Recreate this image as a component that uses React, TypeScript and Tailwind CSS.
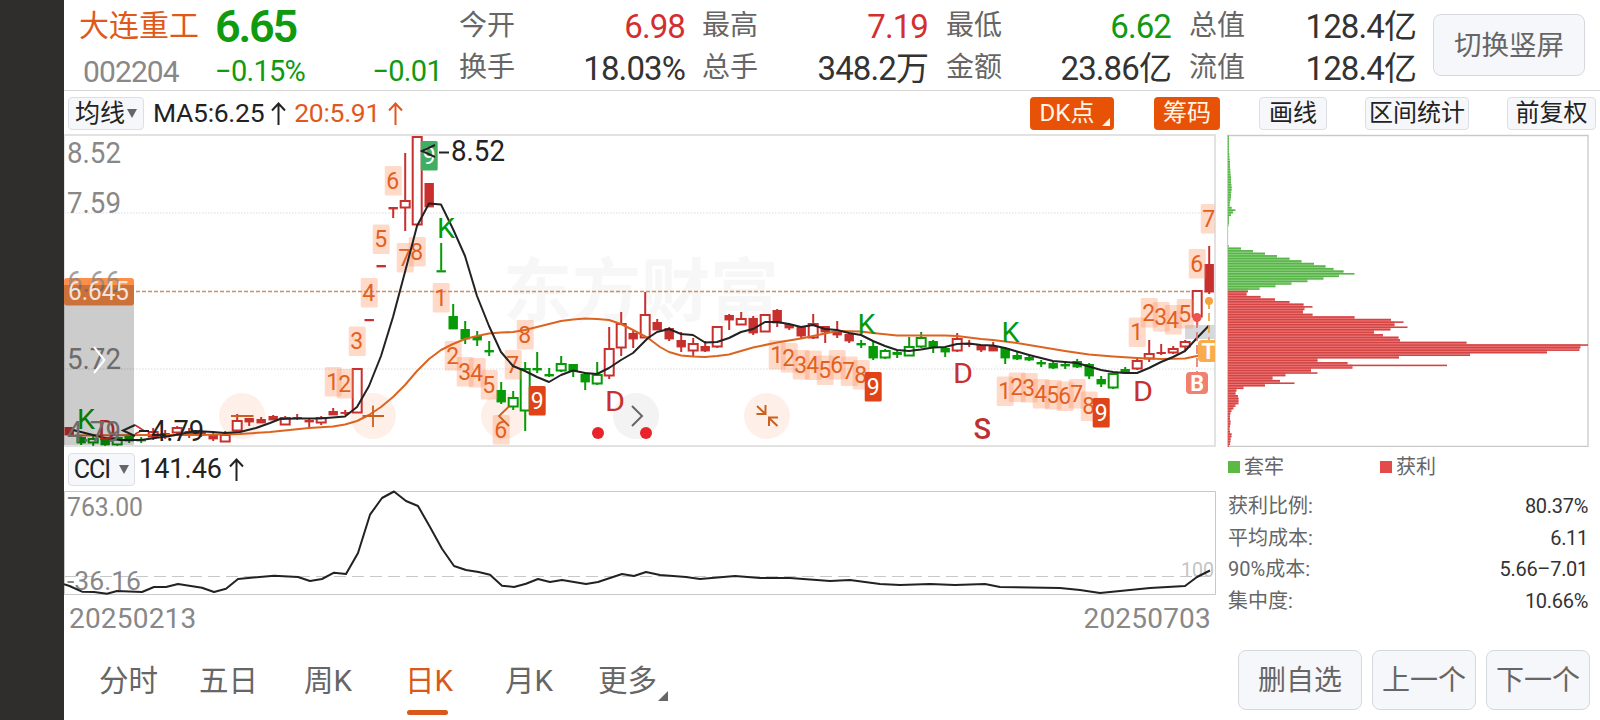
import clsx from "clsx";

type Kind = "R" | "r" | "G" | "g";
// high, body top, body bottom, low, kind (upper case = hollow body)
type Candle = [number, number, number, number, Kind];

const RED = "#c8302e";
const GREEN = "#069a06";

const candles: Candle[] = [
  [427, 427, 435, 435, "r"], [437, 437, 443, 445, "g"], [436, 438, 443, 446, "G"], [437, 439, 445, 446, "g"],
  [436, 437, 445, 446, "G"], [434, 436, 441, 443, "g"], [437, 439, 441, 443, "g"], [428, 431, 437, 440, "R"],
  [430, 433, 437, 439, "r"], [426, 427, 433, 434, "R"], [428, 431, 435, 438, "r"], [428, 431, 435, 437, "r"],
  [433, 435, 439, 441, "r"], [431, 434, 442, 442, "R"], [414, 420, 431, 431, "R"], [418, 418, 422, 426, "r"],
  [417, 419, 423, 423, "r"], [415, 416, 420, 420, "r"], [416, 417, 425, 425, "R"], [414, 417, 418.5, 420, "r"],
  [419, 420, 422, 427, "r"], [416, 417, 423, 425, "R"], [408, 411, 415, 415, "r"], [410, 412, 413.5, 415, "r"],
  [368, 368, 413, 413, "R"], [319, 319, 320.8, 320, "r"], [265, 265, 267, 266, "r"], [207, 207, 209, 218, "r"],
  [153, 200, 208, 231, "R"], [136, 136, 225, 225, "R"], [183, 183, 207, 207, "r"], [243, 270.2, 272, 272, "g"],
  [304, 316, 329, 329, "g"], [321, 329, 339, 344, "g"], [331, 336, 340, 346, "g"], [341, 350, 352, 356, "g"],
  [382, 390, 402, 404, "g"], [391, 397, 407, 410, "G"], [362, 368, 411, 431, "G"], [352, 368, 370, 373, "g"],
  [368, 374, 376, 377, "g"], [356, 363, 371, 372, "G"], [364, 364, 371, 377, "g"], [372, 374, 382, 390, "g"],
  [362, 374, 384, 385, "G"], [327, 348, 376, 379, "R"], [312, 323, 348, 356, "R"], [330, 333, 339, 348, "r"],
  [292, 314, 338, 338, "R"], [319, 322, 330, 330, "r"], [327, 328, 339, 341, "r"], [332, 340, 347, 352, "r"],
  [338, 343, 351, 356, "R"], [341, 346, 351, 352, "r"], [326, 326, 347, 348, "R"], [314, 315, 320, 330, "r"],
  [312, 318, 325, 325, "R"], [316, 318, 333, 335, "r"], [314, 314, 332, 332, "R"], [309, 310, 323, 327, "r"],
  [323, 324, 328, 330, "r"], [326, 327, 336, 338, "r"], [314, 323, 338, 339, "R"], [326, 326, 332, 343, "r"],
  [321, 331, 335, 338, "r"], [333, 334, 341, 343, "r"], [340, 343, 345, 348, "g"], [341, 346, 358, 360, "g"],
  [349, 350, 358, 359, "G"], [351, 352, 354.5, 358, "g"], [337, 346, 356, 356, "G"], [332, 337, 347, 348, "G"],
  [340, 341, 347, 353, "g"], [347, 348, 352, 357, "g"], [333, 338, 351, 352, "R"], [340, 343, 344.6, 347, "r"],
  [345, 345, 350, 352, "r"], [342, 346, 351, 351, "r"], [347, 348, 358, 364, "g"], [351, 355, 359, 360, "g"],
  [354, 357, 360, 361, "g"], [360, 362, 364, 367, "g"], [361, 363, 368, 369, "g"], [362, 364, 366, 369, "g"],
  [359, 361, 367, 368, "g"], [363, 364, 376, 379, "g"], [376, 379, 384, 387, "g"], [373, 373, 388, 389, "G"],
  [367, 369, 373, 373, "g"], [359, 360, 369, 370, "R"], [340, 353, 359, 362, "R"], [344, 352, 353.6, 355, "r"],
  [346, 348, 353, 354, "R"], [340, 341, 347, 350, "R"], [290, 290, 317, 325, "R"], [246, 264, 292, 294, "r"],
];

const ma5 =
  "73,430 85,433 105,438 120,440 141,440 155,438 173,435.5 195,431 213,432 225,433 240,432 256,428 270,423 280,419 297,418.5 320,418.5 345,416.5 357,407 369,386 381,356 393,317 405,272 417,226 429,203.5 441,204.5 453,229 465,256 477,296 489,326 501,352 513,366 525,371 537,377 549,382 561,375 573,370.5 585,373 597,374 609,368 621,360 633,353 648,338 657,332 669,329 681,334 693,335 705,342.5 717,342 729,338 741,332 753,329 765,322 777,322 789,324 801,327 813,325 825,329 837,330 849,333 861,335 873,341 885,346 897,350 909,351 921,349.5 933,347.5 945,347 957,344 969,343.5 981,345 993,345.5 1005,348 1017,351.5 1029,355 1041,358 1053,361 1065,362 1077,363 1089,366.5 1101,370 1113,372 1125,373 1137,373 1149,368 1161,362 1173,357 1185,351 1197,338 1209,325.5";
const ma20 =
  "75,435.5 150,435 200,435 240,434 270,432 309,428 333,426.5 345,424.5 357,421 369,415 381,407 393,397 405,385 417,371 429,359 441,350 453,344 465,339 477,336 489,333.5 501,332.5 513,332 525,330 537,327 549,324 561,321 573,319.5 585,318.5 597,319 609,320 621,324 633,330 648,338 660,347 669,352 681,355.5 693,356.5 705,357 717,356 729,354.5 741,351 753,347.5 777,342.5 801,338.5 825,333.5 837,331 861,331.5 873,333 897,335.5 921,335.5 945,335.5 957,336 981,339 993,340 1017,343 1041,347 1065,351 1089,354.5 1113,356.5 1137,358 1161,359 1185,358.5 1197,356 1209,353";
const cci =
  "64,584.3 69.5,586 82,591.7 94,592 107,593.7 117,591 142,592 154,587 166,587 178,584 202,587.7 214,592 226,588.7 238,579 274,575.7 298,577 310,581 322,579 334,572.7 346,574 358,553 370,514.7 382,498 394,491.5 406,501 418,506 430,527 442,548.7 454,566 466,570 478.6,572 490,574.7 502,585.7 514,587 526,583.7 538,579 550,582 562,580 586,584 598,582 622,574 634,576 646,572 660,575 686,577 700,579 735,576 760,578 790,578 830,581 850,580 880,584 900,585 930,584 955,585 985,584 1000,587 1060,588 1080,590 1100,593 1130,590 1150,588 1185,586 1197,577 1210,570.5";

// nine-turn counters: digit, candle index, top
const counts: [number, number, number][] = [
  [1, 22, 367], [2, 23, 369], [3, 24, 326.5], [4, 25, 278], [5, 26, 224.5], [6, 27, 166], [7, 28, 243], [8, 29, 237],
  [1, 31, 283], [2, 32, 341], [3, 33, 357], [4, 34, 358], [5, 35, 370], [6, 36, 415], [7, 37, 350], [8, 38, 320],
  [1, 59, 340], [2, 60, 343], [3, 61, 350], [4, 62, 350.5], [5, 63, 355.5], [6, 64, 350], [7, 65, 356.5], [8, 66, 360],
  [1, 78, 376.5], [2, 79, 372.5], [3, 80, 373], [4, 81, 379], [5, 82, 380], [6, 83, 381.5], [7, 84, 379], [8, 85, 391.5],
  [1, 89, 317.5], [2, 90, 298], [3, 91, 302], [4, 92, 305], [5, 93, 299], [6, 94, 249], [7, 95, 204],
];
const nines: [number, number, string][] = [
  [30, 141, "#3fae63"], [39, 386, "#df4317"], [67, 372, "#df4317"], [86, 398, "#df4317"],
];
// letter, left, baseline, colour, width
const signals: [string, number, number, string, number][] = [
  ["K", 77, 428.5, GREEN, 18], ["D", 98, 440, RED, 18], ["K", 437, 238, GREEN, 18], ["K", 857.5, 334, GREEN, 18],
  ["K", 1001.5, 341.5, GREEN, 18], ["D", 605, 410.5, RED, 20], ["D", 953, 383, RED, 20], ["D", 1133, 400.5, RED, 20],
];

const trapped = [
  1, 1, 1, 1, 1, 1, 1, 1.3, 1.3, 1.6, 2, 2, 2, 2.3, 2.3, 2.6, 3, 3, 3, 3.3, 3.6, 3.6, 3.3, 3, 3, 2.6, 2, 1.6, 3.6, 7.5, 5, 3,
  1, 1, 1, 0.6, 0, 0, 0, 0, 0, 0, 0, 0.6, 13, 25, 37, 49, 61.5, 73.5, 86, 97.5, 105.5, 115.5, 126.5, 111, 95.5, 79.5, 63.5, 47.5, 31.5,
];
const profit = [
  20, 18.5, 32.5, 47, 61.5, 75.5, 84.5, 76.5, 75, 84.5, 126.5, 163, 175.5, 166.5, 179.5, 162.5, 146, 155, 170.5, 172, 238.5,
  360, 352.5, 351.5, 319, 242, 171, 89.5, 119.5, 219, 124.5, 83, 89.5, 57.5, 44.5, 52, 66.5, 37, 15.5, 8.5, 7.5, 10, 10.5, 10.5,
  10.5, 7.5, 5.5, 3.5, 2.5, 2, 2, 2.5, 2.5, 2, 1.5, 2, 3.5, 3.5, 2.5, 2.5, 2, 1,
];

const cx = (i: number) => 69.2 + i * 12;

const CandleShape = ({ c, i }: { c: Candle; i: number }) => {
  const [high, top, bottom, low, kind] = c;
  const x = cx(i);
  const color = kind.toLowerCase() === "r" ? RED : GREEN;
  const hollow = kind === "R" || kind === "G";
  return (
    <g stroke={color} strokeWidth={2}>
      {high < top && <line x1={x} x2={x} y1={high} y2={top} />}
      {low > bottom && <line x1={x} x2={x} y1={bottom} y2={low} />}
      {hollow ? (
        <rect x={x - 4.5} y={top + 1} width={9} height={Math.max(bottom - top - 1.5, 1)} fill="white" />
      ) : (
        <rect x={x - 4.7} y={top} width={9.4} height={bottom - top + 0.4} fill={color} stroke="none" />
      )}
    </g>
  );
};

const PriceChart = () => (
  <svg className="block h-[313px] w-[1152px]" viewBox="64 134 1152 313" fontFamily="Roboto, 'Noto Sans CJK SC', sans-serif">
    <rect x="64" y="134" width="1152" height="313" fill="white" />
    <text x="503" y="316" fontSize="69" fontWeight="700" fill="#f7f7f7" textLength="276">东方财富</text>
    <path d="M64 135H1215V446H64Z" fill="none" stroke="#e2e2e2" strokeWidth="2" />
    <path d="M64 213H1214M64 369H1214" stroke="#dcdcdc" strokeWidth="1.2" strokeDasharray="1.5 1.5" />
    <path d="M64 291.5H1214" stroke="#cc8f66" strokeWidth="1.4" strokeDasharray="4 2" />

    {[[242, "#fef0e8"], [373, "#fef0e8"], [504, "#fef0e8"], [636, "#f3f3f3"], [767, "#fef0e8"]].map(([x, fill]) => (
      <circle key={x} cx={x} cy="416" r="23" fill={String(fill)} />
    ))}
    <rect x="1185" y="325" width="30" height="14" fill="#d5d8dc" />

    {candles.map((c, i) => (
      <CandleShape key={i} c={c} i={i} />
    ))}

    {counts.map(([n, i, y]) => (
      <g key={`${n}-${i}`}>
        <rect x={cx(i) - 8.5} y={y} width={Math.min(17, 1214.5 - cx(i) + 8.5)} height="29.5" rx="1.5" fill="#ff8f5c" fillOpacity=".33" />
        <text x={cx(i) - 0.5} y={y + 22.5} fontSize="23" textAnchor="middle" fill="#e2601f">{n}</text>
      </g>
    ))}
    {nines.map(([i, y, fill]) => (
      <g key={i}>
        <rect x={cx(i) - 8.5} y={y} width="17" height="29.5" rx="1.5" fill={fill} />
        <text x={cx(i)} y={y + 22.5} fontSize="23" textAnchor="middle" fill="white">9</text>
      </g>
    ))}

    <polyline points={ma20} fill="none" stroke="#dd6420" strokeWidth="2" strokeLinejoin="round" />
    <polyline points={ma5} fill="none" stroke="#222" strokeWidth="2" strokeLinejoin="round" />

    {signals.map(([s, x, y, fill, w]) => (
      <text key={x} x={x} y={y} fontSize="28" fill={fill} textLength={w} lengthAdjust="spacingAndGlyphs">{s}</text>
    ))}
    <text x="973.5" y="438.500" fontSize="29" fontWeight="500" fill="#bd3030">S</text>

    <g fill="none" stroke="#c9601f" strokeWidth="1.8">
      <path d="M231 416H253.500M362.500 416H384M373 405.500V427M509 406.500L499 416L509 426" />
      <path d="M757 406L765 413.500M765.500 405V414H756.500M777.500 426L769.500 418.500M769 426V417.500H778" strokeWidth="2" />
    </g>
    <path d="M632 406L642 416L632 426" fill="none" stroke="#666" strokeWidth="2" />
    <circle cx="598" cy="433" r="6" fill="#e8232a" />
    <circle cx="646" cy="433" r="6" fill="#e8232a" />

    <path d="M1197 319V372" stroke="#e0736a" strokeWidth="1.6" strokeDasharray="9 4" />
    <circle cx="1197" cy="317.500" r="4.500" fill="#ef5350" />
    <path d="M1209 301V340" stroke="#eba747" strokeWidth="1.8" strokeDasharray="8 4" />
    <circle cx="1209" cy="301" r="4" fill="#f3a43b" />
    <path d="M1215 340H1202a4 4 0 0 0-4 4V358a4 4 0 0 0 4 4H1215Z" fill="#f8ac4c" />
    <text x="1201.500" y="359" fontSize="22" fontWeight="700" fill="white">T</text>
    <rect x="1186" y="372" width="22" height="22" rx="4" fill="#f0806f" />
    <text x="1197" y="390.500" fontSize="21.500" fontWeight="700" textAnchor="middle" fill="white">B</text>

    <g fill="#888" fontSize="29">
      <text x="67" y="163" textLength="54" lengthAdjust="spacingAndGlyphs">8.52</text>
      <text x="67" y="213" textLength="54" lengthAdjust="spacingAndGlyphs">7.59</text>
    </g>
    <rect x="64" y="278" width="70" height="27.500" rx="3" fill="#ff8e48" />
    <g fill="#888" fontSize="29">
      <text x="67" y="291.500" textLength="54" lengthAdjust="spacingAndGlyphs" fillOpacity=".8">6.66</text>
      <text x="67" y="369" textLength="54" lengthAdjust="spacingAndGlyphs">5.72</text>
      <text x="67" y="441.500" textLength="54" lengthAdjust="spacingAndGlyphs">4.79</text>
    </g>
    <rect x="64" y="285" width="70" height="160" fill="black" fillOpacity=".2" />
    <text x="68" y="300" fontSize="25" fill="#f5e3d9" textLength="61" lengthAdjust="spacingAndGlyphs">6.645</text>
    <path d="M94 347L104.500 360L94 373" fill="none" stroke="white" strokeWidth="2" />

    <path d="M135 425L143 430L135 434" fill="none" stroke={RED} strokeWidth="1.5" />
    <g fill="none" stroke="#222" strokeWidth="2">
      <path d="M135 425L123 430.500L135 436M139 431H149" />
      <path d="M435 145L422 151L435 157M439 152.500H449" />
    </g>
    <g fill="#222" fontSize="29">
      <text x="151" y="441" textLength="53" lengthAdjust="spacingAndGlyphs">4.79</text>
      <text x="451" y="161" textLength="54" lengthAdjust="spacingAndGlyphs">8.52</text>
    </g>
  </svg>
);

const CciChart = () => (
  <svg className="block h-[105px] w-[1152px]" viewBox="64 490 1152 105" fontFamily="Roboto, sans-serif">
    <path d="M64.500 491.500H1215.500V594.500H64.500Z" fill="none" stroke="#c9c9c9" />
    <path d="M64 576.500H1215" stroke="#c8c8c8" strokeDasharray="12 6" />
    <g fill="#888" fontSize="25">
      <text x="67" y="516" textLength="76" lengthAdjust="spacingAndGlyphs">763.00</text>
      <text x="67" y="590" textLength="74" lengthAdjust="spacingAndGlyphs">-36.16</text>
      <text x="1181" y="576.500" fontSize="21" fill="#c4c4c4" textLength="33" lengthAdjust="spacingAndGlyphs">100</text>
    </g>
    <polyline points={cci} fill="none" stroke="#222" strokeWidth="2" strokeLinejoin="round" />
  </svg>
);

const ChipChart = () => {
  const bars = [...trapped, ...profit];
  const step = 2.545;
  const start = 290.9 - trapped.length * step;
  return (
    <svg className="block h-[313px] w-[362px]" viewBox="1227 134 362 313">
      <path d="M1227.500 135.500H1588V446.500H1227.500Z" fill="none" stroke="#c9c9c9" strokeWidth="1.300" />
      {bars.map((w, i) => {
        const green = i < trapped.length;
        const y = start + i * step;
        const inner = Math.min(w, bars[i + 1] ?? 0);
        return (
          <g key={i}>
            <rect x="1228" y={y} width={inner} height={step + 0.1} fill={green ? "#8ed383" : "#f07777"} />
            <rect x="1228" y={y - 0.1} width={w} height="1.600" fill={green ? "#58b348" : "#d34545"} />
          </g>
        );
      })}
    </svg>
  );
};

const stats = [
  { label: "今开", value: "6.98", tone: "text-[#d2302e]", label2: "换手", value2: "18.03%", box: "w-[226px] mr-[17px]" },
  { label: "最高", value: "7.19", tone: "text-[#d2302e]", label2: "总手", value2: "348.2万", box: "w-[226px] mr-[18px]" },
  { label: "最低", value: "6.62", tone: "text-[#109a10]", label2: "金额", value2: "23.86亿", box: "w-[225px] mr-[18px]" },
  { label: "总值", value: "128.4亿", tone: "text-[#333]", label2: "流值", value2: "128.4亿", box: "w-[227px] mr-[17px]" },
];

const Header = () => (
  <header className="flex h-[91px] border-b border-[#d8d8d8] pl-[15px]">
    <div className="w-[136px] pt-[11px]">
      <div className="text-[30px] leading-[30px] text-[#e0591b]">大连重工</div>
      <div className="mt-[16px] pl-1 text-[30px] leading-[30px] tracking-[-0.9px] text-[#888]">002204</div>
    </div>
    <div className="w-[228px] pt-[6px] text-[#109a10]">
      <div className="text-[45px] font-semibold leading-[42px] tracking-[-2.2px]">6.65</div>
      <div className="mt-[8px] flex justify-between pr-px text-[29px] leading-[30px] tracking-[-0.7px]">
        <span>−0.15%</span>
        <span>−0.01</span>
      </div>
    </div>
    <div className="ml-[16px] flex pt-[5px]">
      {stats.map((s) => (
        <dl key={s.label} className={s.box}>
          <div className="flex h-[42px] items-center justify-between leading-none">
            <dt className="text-[28px] text-[#666]">{s.label}</dt>
            <dd className={clsx("text-[33px] tracking-[-0.9px]", s.tone)}>{s.value}</dd>
          </div>
          <div className="flex h-[42px] items-center justify-between leading-none">
            <dt className="text-[28px] text-[#666]">{s.label2}</dt>
            <dd className="text-[33px] tracking-[-0.9px] text-[#333]">{s.value2}</dd>
          </div>
        </dl>
      ))}
    </div>
    <button className="mt-[14px] h-[62px] w-[152px] rounded-lg border border-[#d5d9de] bg-[#f6f7fa] pt-px text-[27.5px] leading-none text-[#666]">
      切换竖屏
    </button>
  </header>
);

const UpArrow = () => (
  <svg className="h-[23px] w-[15px]" viewBox="0 0 15 23" fill="none" stroke="currentColor" strokeWidth="2">
    <path d="M7.500 23V2M1 8.500L7.500 1.500L14 8.500" />
  </svg>
);

const Caret = () => (
  <svg className="h-[9px] w-[10px]" viewBox="0 0 10 9">
    <path d="M0 0H10L5 9Z" fill="#666" />
  </svg>
);

const tool = "relative flex h-[33px] items-center justify-center rounded text-[24px] leading-none";
const plain = "border border-[#dcdfe5] bg-[#f6f7fa] text-[#222]";
const active = "bg-[#e85207] text-[#fff6e6]";

const Toolbar = () => (
  <div className="flex h-[43px] items-center pl-1 pt-px">
    <button className={clsx(tool, plain, "w-[76px] gap-[2px] text-[25px]")}>
      均线
      <Caret />
    </button>
    <div className="ml-[9px] flex items-center gap-[7px] text-[26.5px] leading-none tracking-[-0.3px] text-[#222]">
      MA5:6.25
      <UpArrow />
    </div>
    <div className="ml-[8px] flex items-center gap-[8px] text-[26.5px] leading-none tracking-[-0.3px] text-[#e0591b]">
      20:5.91
      <UpArrow />
    </div>
    <div className="ml-auto flex">
      <button className={clsx(tool, active, "w-[84px] pr-[10px]")}>
        DK点
        <svg className="absolute bottom-1 right-1 h-2 w-2" viewBox="0 0 8 8">
          <path d="M8 0V8H0Z" fill="#fff6e6" />
        </svg>
      </button>
      <button className={clsx(tool, active, "ml-[40px] w-[66px]")}>筹码</button>
      <button className={clsx(tool, plain, "ml-[39px] w-[68px]")}>画线</button>
      <button className={clsx(tool, plain, "ml-[38px] w-[104px] text-[22.5px]")}>区间统计</button>
      <button className={clsx(tool, plain, "ml-[38px] mr-[4px] w-[89px]")}>前复权</button>
    </div>
  </div>
);

const costs = [
  ["获利比例:", "80.37%"],
  ["平均成本:", "6.11"],
  ["90%成本:", "5.66–7.01"],
  ["集中度:", "10.66%"],
];

const ChipPanel = () => (
  <aside className="w-[362px]">
    <ChipChart />
    <div className="flex h-[40px] items-center pl-px text-[20px] leading-none text-[#666]">
      <span className="mr-[4px] size-3 bg-[#5cb946]" />
      <span className="w-[136px]">套牢</span>
      <span className="mr-[4px] size-3 bg-[#e34a4a]" />
      获利
    </div>
    <dl className="pl-px pr-px pt-[4px] text-[20px] leading-[31.5px] text-[#666]">
      {costs.map(([label, value]) => (
        <div key={label} className="flex justify-between">
          <dt>{label}</dt>
          <dd className="tracking-[-0.3px] text-[#333]">{value}</dd>
        </div>
      ))}
    </dl>
  </aside>
);

const tabs = [
  { name: "分时", box: "w-[58px] mr-[42px]" },
  { name: "五日", box: "w-[58px] mr-[47px]" },
  { name: "周K", box: "w-[50px] mr-[51px]" },
  { name: "日K", box: "w-[50px] mr-[50px]" },
  { name: "月K", box: "w-[50px] mr-[43px]" },
  { name: "更多", box: "w-[70px]" },
];

const Footer = () => (
  <footer className="flex h-[77px] pl-[35px] pr-[10px] pt-[7px]">
    <nav className="flex">
      {tabs.map(({ name, box }) => (
        <button
          key={name}
          className={clsx("relative h-[64px] whitespace-nowrap text-left text-[29.5px] leading-none", box, name === "日K" ? "text-[#d9591a]" : "text-[#666]")}
        >
          {name}
          {name === "日K" && <span className="absolute -bottom-px left-[2px] h-[5px] w-[41px] rounded-full bg-[#d9591a]" />}
          {name === "更多" && (
            <svg className="absolute bottom-[13px] right-0 size-[10px]" viewBox="0 0 10 10">
              <path d="M10 0V10H0Z" fill="#666" />
            </svg>
          )}
        </button>
      ))}
    </nav>
    <div className="ml-auto flex gap-[10px] text-[28px] leading-none text-[#666]">
      <button className="h-[60px] w-[124px] rounded-lg border border-[#d5d9de] bg-[#f6f7fa] pt-[2px]">删自选</button>
      <button className="h-[60px] w-[104px] rounded-lg border border-[#d5d9de] bg-[#f6f7fa] pt-[2px]">上一个</button>
      <button className="h-[60px] w-[104px] rounded-lg border border-[#d5d9de] bg-[#f6f7fa] pt-[2px]">下一个</button>
    </div>
  </footer>
);

export default function App() {
  return (
    <div className="flex h-[720px] w-[1600px] overflow-hidden bg-white font-['Roboto','Noto_Sans_CJK_SC',sans-serif]">
      <div className="w-16 shrink-0 bg-[#2f2e2d]" />
      <main className="flex w-[1536px] flex-col">
        <Header />
        <Toolbar />
        <div className="flex h-[509px] gap-[11px]">
          <section className="w-[1152px]">
            <PriceChart />
            <div className="flex h-[43px] items-center pl-1 pt-px text-[27px] leading-none text-[#222]">
              <button className={clsx(tool, plain, "w-[67px] gap-[9px] text-[25px]")}>
                <span className="tracking-[-1px]">CCI</span>
                <Caret />
              </button>
              <span className="ml-[4px] mr-[7px] tracking-normal">141.46</span>
              <UpArrow />
            </div>
            <CciChart />
            <div className="flex justify-between pl-[5px] pr-[5px] pt-[9px] text-[28px] leading-[30px] tracking-[0.2px] text-[#888]">
              <span>20250213</span>
              <span>20250703</span>
            </div>
          </section>
          <ChipPanel />
        </div>
        <Footer />
      </main>
    </div>
  );
}
